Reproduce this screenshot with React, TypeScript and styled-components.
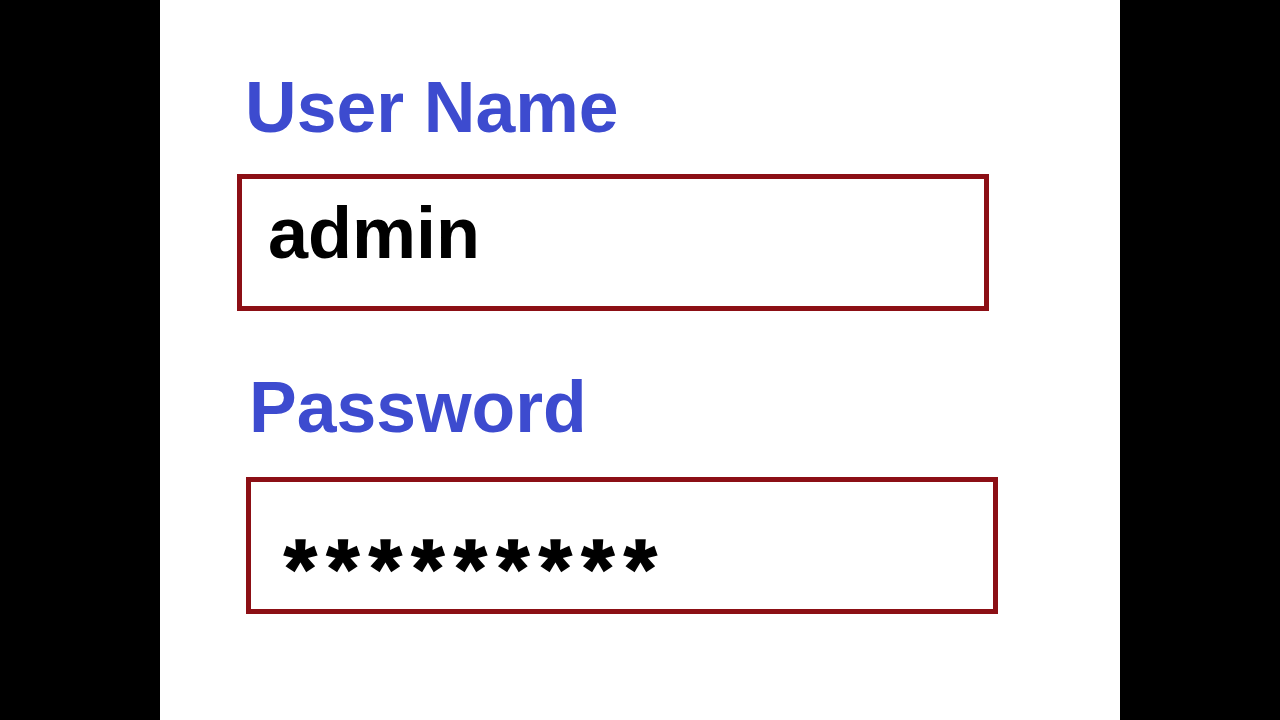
import React from "react";
import styled, { createGlobalStyle } from "styled-components";

const Global = createGlobalStyle`
  html, body { margin: 0; padding: 0; background: #000; }
  body { font-family: "Liberation Sans", Arial, sans-serif; }
`;

const Page = styled.div`
  width: 1280px;
  height: 720px;
  display: flex;
  justify-content: center;
  background: #000;
  overflow: hidden;
`;

const Panel = styled.main`
  width: 960px;
  height: 720px;
  background: #fff;
  display: flex;
  flex-direction: column;
  padding: 72px 0 0 77px;
  box-sizing: border-box;
`;

const Label = styled.label<{ $indent: number; $top: number }>`
  display: block;
  margin: ${(p) => p.$top}px 0 0 ${(p) => p.$indent}px;
  font-family: "Liberation Sans", Arial, sans-serif;
  font-weight: 700;
  font-size: 71.5px;
  line-height: 71px;
  color: #3d4bcf;
  white-space: nowrap;
`;

const Field = styled.div<{ $indent: number; $top: number }>`
  margin: ${(p) => p.$top}px 0 0 ${(p) => p.$indent}px;
  width: 752px;
  height: 137px;
  box-sizing: border-box;
  border: 5px solid #8c0f15;
  padding: 18px 0 0 26px;
`;

const Value = styled.div`
  font-family: "Liberation Sans", Arial, sans-serif;
  font-weight: 700;
  font-size: 72px;
  line-height: 72px;
  color: #000;
  white-space: nowrap;
`;

const Mask = styled.div`
  font-family: "Liberation Sans", Arial, sans-serif;
  font-weight: 700;
  font-size: 84px;
  line-height: 85px;
  letter-spacing: 9.8px;
  color: #000;
  -webkit-text-stroke: 1.6px #000;
  white-space: nowrap;
  margin: 27px 0 0 7px;
`;

export default function App() {
  return (
    <>
      <Global />
      <Page>
        <Panel>
          <Label $indent={8} $top={0}>User Name</Label>
          <Field $indent={0} $top={31}>
            <Value>admin</Value>
          </Field>
          <Label $indent={12} $top={61}>Password</Label>
          <Field $indent={9} $top={34}>
            <Mask>*********</Mask>
          </Field>
        </Panel>
      </Page>
    </>
  );
}
